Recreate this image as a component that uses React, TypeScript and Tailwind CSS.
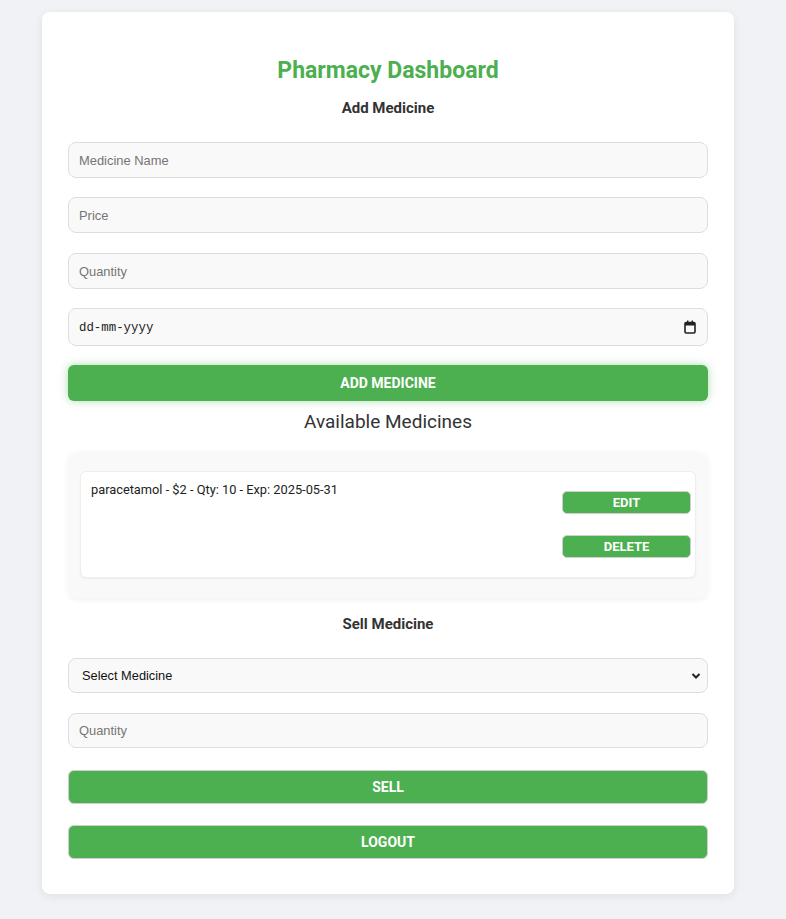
import { useState } from "react";

type Medicine = {
  name: string;
  price: number;
  qty: number;
  exp: string;
};

const inputClass =
  "block w-full rounded-[8px] border border-[#dddddd] bg-[#f9f9f9] pl-[10px] text-[12.9px] text-[#333] placeholder:text-[#757575] outline-none font-['Liberation_Sans',Arial,sans-serif]";

const btnClass =
  "block w-full rounded-[6px] border border-[#cfcfcf] bg-[#4caf50] text-[14px] font-bold uppercase text-white";

function App() {
  const [medicines] = useState<Medicine[]>([
    { name: "paracetamol", price: 2, qty: 10, exp: "2025-05-31" },
  ]);

  return (
    <div className="min-h-[919px] bg-[#f0f2f5] pt-[12px] pb-[25px] pl-[42px] font-['Roboto',sans-serif] text-[#333]">
      <div className="w-[692px] rounded-[8px] bg-white px-[26px] pt-[45px] pb-[35px] shadow-[0_2px_10px_rgba(0,0,0,0.08)]">
        <h1 className="text-center text-[23px] leading-[28px] font-bold text-[#4caf50]">
          Pharmacy Dashboard
        </h1>
        <h3 className="mt-[13px] text-center text-[15px] leading-[20px] font-bold">
          Add Medicine
        </h3>

        {/* Add form */}
        <input className={`mt-[24px] h-[36px] ${inputClass}`} placeholder="Medicine Name" />
        <input className={`mt-[19px] h-[36px] ${inputClass}`} placeholder="Price" />
        <input className={`mt-[20px] h-[36px] ${inputClass}`} placeholder="Quantity" />
        <div className="mt-[19px] flex h-[38px] items-center justify-between rounded-[8px] border border-[#dddddd] bg-[#f9f9f9] pl-[10px] pr-[11px]">
          <span className="pt-[3px] font-['Liberation_Mono',monospace] text-[12.4px] text-[#222]">
            dd-mm-yyyy
          </span>
          <svg width="12" height="14" viewBox="0 0 12 14">
            <rect x="1" y="2.5" width="10" height="10.5" rx="1.2" fill="none" stroke="#222" strokeWidth="1.6" />
            <rect x="1" y="2.5" width="10" height="3" fill="#222" />
            <rect x="3" y="0.5" width="1.4" height="2.5" fill="#222" />
            <rect x="7.6" y="0.5" width="1.4" height="2.5" fill="#222" />
          </svg>
        </div>
        <button className="mt-[19px] block h-[36px] w-full rounded-[6px] bg-[#4caf50] text-[14px] font-bold uppercase text-white shadow-[0_0_8px_rgba(76,175,80,0.45)]">
          Add Medicine
        </button>

        {/* Medicine list */}
        <h2 className="mt-[9px] text-center text-[19px] leading-[24px]">Available Medicines</h2>
        <div className="mt-[18px] rounded-[10px] bg-[#f9f9f9] px-[12px] pt-[19px] pb-[20px] shadow-[0_2px_6px_rgba(0,0,0,0.06)]">
          {medicines.map((m) => (
            <div
              key={m.name}
              className="flex h-[107px] justify-between rounded-[6px] border border-[#eeeeee] bg-white pl-[10px] pr-[4px] shadow-[0_1px_2px_rgba(0,0,0,0.05)]"
            >
              <p className="pt-[10px] text-[12.8px] leading-[16px] text-[#222]">
                {m.name} - ${m.price} - Qty: {m.qty} - Exp: {m.exp}
              </p>
              <div className="flex flex-col gap-[21px] pt-[19px]">
                <button className="h-[23px] w-[129px] rounded-[5px] border border-[#cfcfcf] bg-[#4caf50] text-[13px] font-bold text-white">
                  EDIT
                </button>
                <button className="h-[23px] w-[129px] rounded-[5px] border border-[#cfcfcf] bg-[#4caf50] text-[13px] font-bold text-white">
                  DELETE
                </button>
              </div>
            </div>
          ))}
        </div>

        {/* Sell form */}
        <h3 className="mt-[16px] text-center text-[15px] leading-[20px] font-bold">
          Sell Medicine
        </h3>
        <div className="mt-[24px] flex h-[35px] items-center justify-between rounded-[8px] border border-[#dddddd] bg-[#f9f9f9] pl-[13px] pr-[6px]">
          <span className="font-['Liberation_Sans',Arial,sans-serif] text-[12.8px] text-[#111]">
            Select Medicine
          </span>
          <svg width="10" height="8" viewBox="0 0 10 8">
            <path d="M1.5 2 L5 5.5 L8.5 2" fill="none" stroke="#222" strokeWidth="2" />
          </svg>
        </div>
        <input className={`mt-[20px] h-[35px] ${inputClass}`} placeholder="Quantity" />
        <button className={`mt-[22px] h-[34px] ${btnClass}`}>Sell</button>
        <button className={`mt-[21px] h-[34px] ${btnClass}`}>Logout</button>
      </div>
    </div>
  );
}

export default App;
